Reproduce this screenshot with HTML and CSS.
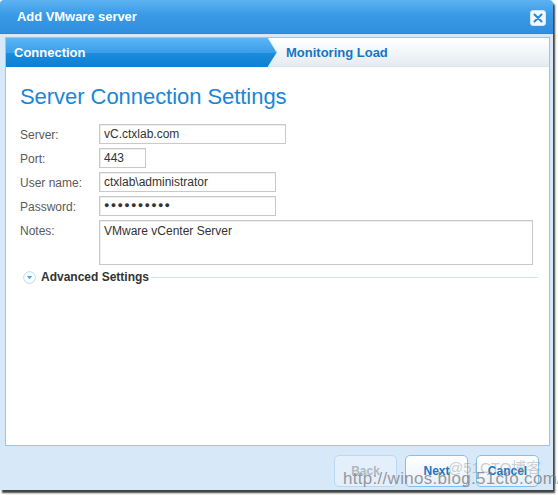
FILE: index.html
```html
<!DOCTYPE html>
<html>
<head>
<meta charset="utf-8">
<link rel="stylesheet" href="styles.css">
</head>
<body>
<div class="dialog">
  <div class="titlebar">
    <span class="title">Add VMware server</span>
    <span class="close"><svg width="10" height="10" viewBox="0 0 10 10"><path d="M1.5 1.5 L8.5 8.5 M8.5 1.5 L1.5 8.5" stroke="#2a86d8" stroke-width="2" stroke-linecap="round"/></svg></span>
  </div>
  <div class="frame">
    <div class="panel">
      <div class="steps">
        <div class="step active">Connection
          <svg class="arrow" width="12" height="29" viewBox="0 0 12 29" preserveAspectRatio="none"><defs><linearGradient id="g" x1="0" y1="0" x2="0" y2="1"><stop offset="0" stop-color="#5bb6f4"/><stop offset="0.5" stop-color="#3a9ee9"/><stop offset="0.52" stop-color="#1b8bdc"/><stop offset="1" stop-color="#0c80d4"/></linearGradient></defs><path d="M0 0 L2 0 L11 14.5 L2 29 L0 29 Z" fill="url(#g)"/><path d="M2 0 L11 14.5 L2 29" fill="none" stroke="#cfe5f7" stroke-width="1"/></svg>
        </div>
        <div class="step next">Monitoring Load</div>
      </div>
      <h1 class="heading">Server Connection Settings</h1>
      <div class="form">
        <div class="row"><label>Server:</label><div class="field w186">vC.ctxlab.com</div></div>
        <div class="row"><label>Port:</label><div class="field w47">443</div></div>
        <div class="row"><label>User name:</label><div class="field w176">ctxlab\administrator</div></div>
        <div class="row"><label>Password:</label><div class="field w176 pw">●●●●●●●●●●</div></div>
        <div class="row"><label>Notes:</label><div class="field notes">VMware vCenter Server</div></div>
      </div>
      <div class="advanced">
        <span class="adv-icon"><svg width="13" height="13" viewBox="0 0 13 13"><circle cx="6.5" cy="6.5" r="5.8" fill="#fff" stroke="#b5d9f5" stroke-width="1"/><path d="M3.8 5 L9.2 5 L6.5 8.3 Z" fill="#4aa5ea"/></svg></span>
        <span class="adv-text">Advanced Settings</span>
        <span class="adv-line"></span>
      </div>
    </div>
    <div class="footer">
      <button class="btn disabled">Back</button>
      <button class="btn">Next</button>
      <button class="btn">Cancel</button>
    </div>
  </div>
</div>
<div class="wm1">@51CTO博客</div>
<div class="wm2">http://winos.blog.51cto.com/</div>
</body>
</html>
```
FILE: styles.css
```css
html, body { margin: 0; padding: 0; background: #ffffff; }
body { width: 558px; height: 495px; position: relative; overflow: hidden; font-family: "Liberation Sans", Arial, sans-serif; }
.dialog {
  width: 553px; height: 490px;
  border-radius: 4px 4px 0 0;
  box-shadow: 2px 3px 2px rgba(0,0,0,0.75);
  display: flex; flex-direction: column;
  background: #d7e9f8;
}
.titlebar {
  height: 34px; flex: none;
  background: linear-gradient(#5cb3f2, #3a9ae6 45%, #2f8fe0);
  border-bottom: 1px solid #2a86d6;
  border-radius: 4px 4px 0 0;
  display: flex; align-items: center; justify-content: space-between;
  padding: 0 7px 0 17px;
  box-sizing: border-box;
}
.title { color: #fff; font-weight: bold; font-size: 13px; letter-spacing: -0.05px; }
.close {
  width: 14px; height: 14px; background: #f4f9fe; border-radius: 3px;
  display: flex; align-items: center; justify-content: center;
  margin-top: 3px; border: 1px solid #cfe6fa;
}
.frame { flex: 1; display: flex; flex-direction: column; padding: 3px 3px 0 5px; }
.panel {
  height: 409px; flex: none;
  background: #fff; border: 1px solid #96c8ef;
  box-sizing: border-box;
}
.steps { display: flex; height: 29px; }
.step { font-weight: bold; font-size: 13px; display: flex; align-items: center; }
.step.active {
  width: 260px; position: relative;
  background: linear-gradient(#5bb6f4, #3a9ee9 50%, #1b8bdc 52%, #0c80d4);
  color: #fff; padding-left: 8px; box-sizing: border-box;
}
.arrow { position: absolute; left: 260px; top: 0; }
.step.next {
  flex: 1; color: #1576c4; padding-left: 20px;
  background: linear-gradient(#ffffff, #f2f6f9 50%, #e4ebf1);
  border-bottom: 1px solid #d8e6f2;
}
.heading {
  margin: 17px 0 0 14px; font-weight: normal; font-size: 22px; color: #1a86d8;
  line-height: 26px; letter-spacing: -0.05px;
}
.form { margin: 14px 0 0 14px; display: flex; flex-direction: column; gap: 4px; }
.row { display: flex; }
.row label { width: 79px; font-size: 12px; color: #5a5a5a; padding-top: 4px; }
.field {
  height: 20px; box-sizing: border-box; border: 1px solid #c9c9c9;
  font-size: 12px; color: #333; padding: 2px 0 0 4px;
  box-shadow: inset 1px 1px 0 #eee;
}
.w186 { width: 187px; }
.w47 { width: 47px; }
.w176 { width: 177px; }
.pw { font-size: 9px; letter-spacing: 1.3px; padding-top: 3px; color: #333; }
.notes { width: 434px; height: 45px; padding-top: 3px; }
.advanced { display: flex; align-items: center; margin: 5px 0 0 17px; }
.adv-icon { display: flex; width: 13px; height: 13px; }
.adv-text { font-weight: bold; font-size: 12px; color: #333; margin-left: 5px; }
.adv-line { flex: none; width: 387px; height: 1px; background: #cce3f5; margin-left: 2px; }
.footer { flex: 1; display: flex; justify-content: flex-end; gap: 8px; padding: 9px 11px 0 0; }
.btn {
  width: 63px; height: 32px; border-radius: 5px; border: 1px solid #82bfee;
  background: linear-gradient(#ffffff, #f3f8fd 50%, #e6f1fb);
  font-family: "Liberation Sans", Arial, sans-serif; font-weight: bold; font-size: 12px; color: #1876c6;
  padding: 0;
}
.btn.disabled { color: #b0b8bf; border-color: #b9d9f3; background: #e3effa; }
.wm1 {
  position: absolute; left: 448px; top: 456px; font-size: 15px; color: rgba(150,150,150,0.45);
  font-family: "Liberation Sans", "Noto Sans CJK SC", sans-serif;
}
.wm2 {
  position: absolute; left: 343px; top: 469px; font-size: 17px; color: rgba(120,120,120,0.75);
  font-family: "Liberation Sans", sans-serif; letter-spacing: 0.3px;
}
```
